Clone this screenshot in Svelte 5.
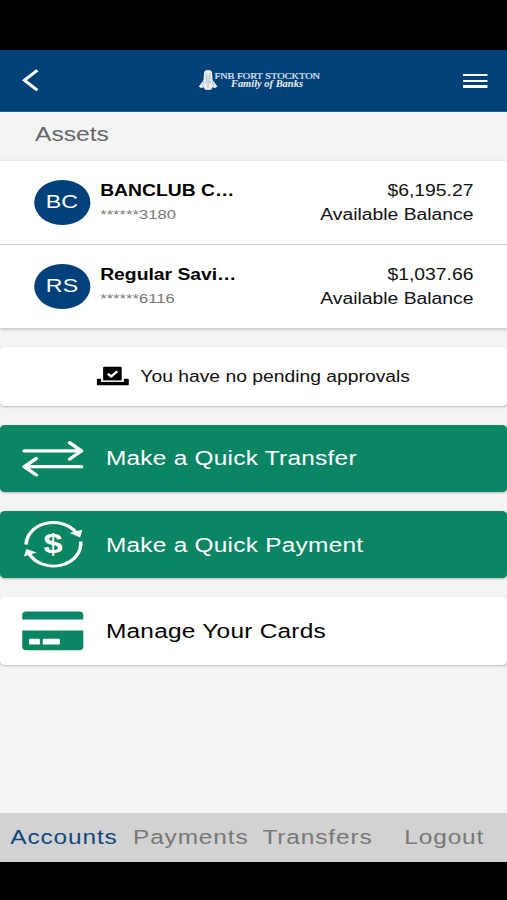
<script>
    const accounts = [
        { initials: 'BC', name: 'BANCLUB C…', number: '******3180', balance: '$6,195.27' },
        { initials: 'RS', name: 'Regular Savi…', number: '******6116', balance: '$1,037.66' }
    ];

    const tabs = ['Accounts', 'Payments', 'Transfers', 'Logout'];
    let active = $state('Accounts');
</script>

<div class="screen">
    <header>
        <button class="back" aria-label="Back">
            <svg width="14" height="24" viewBox="0 0 14 24">
                <path d="M12.6 2.3 L2 12.3 L12.6 22.3" fill="none" stroke="#fff" stroke-width="2.8" />
            </svg>
        </button>

        <svg class="logo" width="101" height="24" viewBox="0 0 101 24">
            <path d="M5 5 Q5 2 8.3 2 Q11.6 2 11.6 5 L12 12 L16 18.5 L14 20 L11.8 19.3 L11 21.5 L8.3 22 L5.6 21.5 L4.8 19.3 L2.5 20 L.8 18.5 L4.6 12 Z" fill="#eef1f6" />
            <path d="M6.8 5 V16 M9.8 5 V16 M8.3 8 V20 M4.8 13 L3.8 18 M11.8 13 L12.8 18" stroke="#8aa0c0" stroke-width=".6" fill="none" />
            <text class="logo-name" x="13.5" y="10.6" textLength="86.5" lengthAdjust="spacingAndGlyphs">FNB FORT STOCKTON</text>
            <text class="logo-sub" x="27" y="19.3" textLength="59" lengthAdjust="spacingAndGlyphs">Family of Banks</text>
        </svg>

        <button class="menu" aria-label="Menu">
            <span></span>
            <span></span>
            <span></span>
        </button>
    </header>

    <main>
        <h2>Assets</h2>

        <section class="accounts">
            {#each accounts as account}
                <div class="account">
                    <div class="avatar">{account.initials}</div>
                    <div class="info">
                        <div class="name">{account.name}</div>
                        <div class="number">{account.number}</div>
                    </div>
                    <div class="balance">
                        <div>{account.balance}</div>
                        <div>Available Balance</div>
                    </div>
                </div>
            {/each}
        </section>

        <div class="card approvals">
            <svg width="27" height="20" viewBox="0 0 27 20">
                <path d="M6.3 .8 H19.7 Q20.6 .8 20.6 1.7 V14.6 H5.4 V1.7 Q5.4 .8 6.3 .8 Z" />
                <path d="M.3 13.6 Q.3 12.8 1.1 12.8 H3.8 V15.8 H22.4 V12.8 H25.6 Q26.4 12.8 26.4 13.6 V18.4 Q26.4 19.3 25.5 19.3 H1.2 Q.3 19.3 .3 18.4 Z" />
                <path d="M3.6 15.2 H22.6" stroke="#fff" stroke-width=".7" />
                <path d="M9.2 7.7 L12 10.4 L17 5.2" fill="none" stroke="#fff" stroke-width="2.2" />
            </svg>
            <span>You have no pending approvals</span>
        </div>

        <button class="card action green">
            <svg width="51" height="40" viewBox="0 0 51 40">
                <g fill="none" stroke="#fff" stroke-width="3.2" stroke-linecap="round" stroke-linejoin="round">
                    <path d="M1.9 12.9 H48.5 M39 4.7 L48.7 12.9 L39 21.1" />
                    <path d="M48.7 28.7 H1.9 M11.6 20.5 L1.9 28.7 L11.6 36.9" />
                </g>
            </svg>
            <span>Make a Quick Transfer</span>
        </button>

        <button class="card action green">
            <svg width="51" height="50" viewBox="0 0 51 50">
                <g fill="none" stroke="#fff" stroke-width="2.9">
                    <path d="M3.4 24.5 A22.3 22.3 0 0 1 44.3 12.5" />
                    <path d="M48 21.5 A22.3 22.3 0 0 1 6 34" />
                </g>
                <path d="M39 13 L49.4 9.8 L47.6 17.4 Z" fill="#fff" />
                <path d="M1.6 36.6 L3.6 29 L12 32.6 Z" fill="#fff" />
                <text class="dollar" x="25.4" y="33" text-anchor="middle">$</text>
            </svg>
            <span>Make a Quick Payment</span>
        </button>

        <button class="card action">
            <svg width="51" height="40" viewBox="0 0 51 40">
                <path d="M.2 8.6 V3.8 Q.2 .4 3.4 .4 H47 Q50.2 .4 50.2 3.8 V8.6 Z" fill="#0b8665" />
                <path d="M.2 19.5 H50.2 V35.8 Q50.2 39.2 47 39.2 H3.4 Q.2 39.2 .2 35.8 Z" fill="#0b8665" />
                <rect x="5.8" y="27.8" width="8.8" height="5.8" rx=".9" fill="#fff" />
                <rect x="17" y="27.8" width="14" height="5.8" rx=".9" fill="#fff" />
            </svg>
            <span>Manage Your Cards</span>
        </button>
    </main>

    <nav>
        {#each tabs as tab}
            <button class:active={active === tab} onclick={() => (active = tab)}>{tab}</button>
        {/each}
    </nav>
</div>

<style>
    :global(body) {
        background: #000;
        overflow: hidden;
    }

    /* laid out at 415px, stretched to the full device width */
    .screen {
        width: 415px;
        height: 900px;
        padding: 50px 0 38px;
        box-sizing: border-box;
        display: flex;
        flex-direction: column;
        transform: scaleX(1.2217);
        transform-origin: 0 0;
        font-family: "Liberation Sans", Arial, sans-serif;
        font-size: 15.8px;
        color: #111;
        background: #000;
    }

    button {
        font: inherit;
        color: inherit;
        border: 0;
        padding: 0;
        background: none;
        cursor: pointer;
    }

    svg {
        display: block;
        flex: none;
        overflow: visible;
    }

    header {
        height: 61.5px;
        padding: 0 16px 0 17.5px;
        display: grid;
        grid-template-columns: 1fr auto 1fr;
        align-items: center;
        background: #004179;
        border-bottom: 1px solid #2b5f8e;
        box-sizing: border-box;
    }

    .back {
        justify-self: start;
        padding-left: 2.5px;
        margin-left: -2px;
    }

    .logo {
        margin-left: 8px;
    }

    .logo-name {
        font-family: "Liberation Serif", serif;
        font-size: 9.2px;
        fill: #eaf0f7;
        stroke: #eaf0f7;
        stroke-width: .15px;
    }

    .logo-sub {
        font-family: "Liberation Serif", serif;
        font-size: 9.5px;
        font-style: italic;
        font-weight: bold;
        fill: #eef2f8;
    }

    .menu {
        justify-self: end;
        width: 20px;
        display: flex;
        flex-direction: column;
        gap: 3.5px;
        padding-top: 1px;
    }

    .menu span {
        height: 2.3px;
        background: #fff;
    }

    main {
        flex: 1;
        background: #f4f4f4;
    }

    h2 {
        margin: 0;
        height: 49px;
        padding: 0 28.6px;
        font-size: 20.2px;
        font-weight: normal;
        line-height: 45px;
        color: #666;
        box-sizing: border-box;
    }

    .accounts {
        background: #fff;
        box-shadow: 0 1px 3px rgba(0, 0, 0, .28);
        margin-bottom: 19px;
    }

    .account {
        height: 83.6px;
        padding: 0 28px;
        display: flex;
        align-items: center;
        box-sizing: border-box;
    }

    .account + .account {
        border-top: 1px solid #ccc;
    }

    .avatar {
        width: 45.5px;
        height: 45.5px;
        margin-right: 8.5px;
        border-radius: 50%;
        background: #00417b;
        color: #fff;
        font-size: 19px;
        line-height: 44px;
        text-align: center;
    }

    .info {
        flex: 1;
        line-height: 24px;
        padding-top: 1px;
    }

    .name {
        font-weight: bold;
        color: #000;
    }

    .number {
        font-size: 13.6px;
        color: #777;
    }

    .balance {
        text-align: right;
        line-height: 24px;
        padding-top: 1px;
        margin-right: -.5px;
    }

    .card {
        width: 100%;
        display: flex;
        align-items: center;
        background: #fff;
        border-radius: 4px;
        box-shadow: 0 1px 2px rgba(0, 0, 0, .25);
        box-sizing: border-box;
    }

    .approvals {
        height: 59px;
        justify-content: center;
        gap: 8.5px;
        margin-bottom: 19px;
    }

    .approvals span {
        padding-top: 1px;
    }

    .action {
        height: 67.5px;
        padding-left: 18px;
        gap: 17.7px;
        font-size: 20px;
        letter-spacing: .2px;
        color: #000;
        margin-bottom: 18.7px;
    }

    .action span {
        padding-top: 1px;
    }

    .green {
        background: #0b8665;
        color: #fff;
    }

    .dollar {
        font-size: 28px;
        font-weight: bold;
        fill: #fff;
    }

    nav {
        height: 49px;
        display: grid;
        grid-template-columns: repeat(4, 1fr);
        background: #d2d2d2;
    }

    nav button {
        font-size: 20px;
        letter-spacing: .7px;
        padding-left: 1px;
        color: #777;
    }

    nav .active {
        color: #0f4680;
    }
</style>
